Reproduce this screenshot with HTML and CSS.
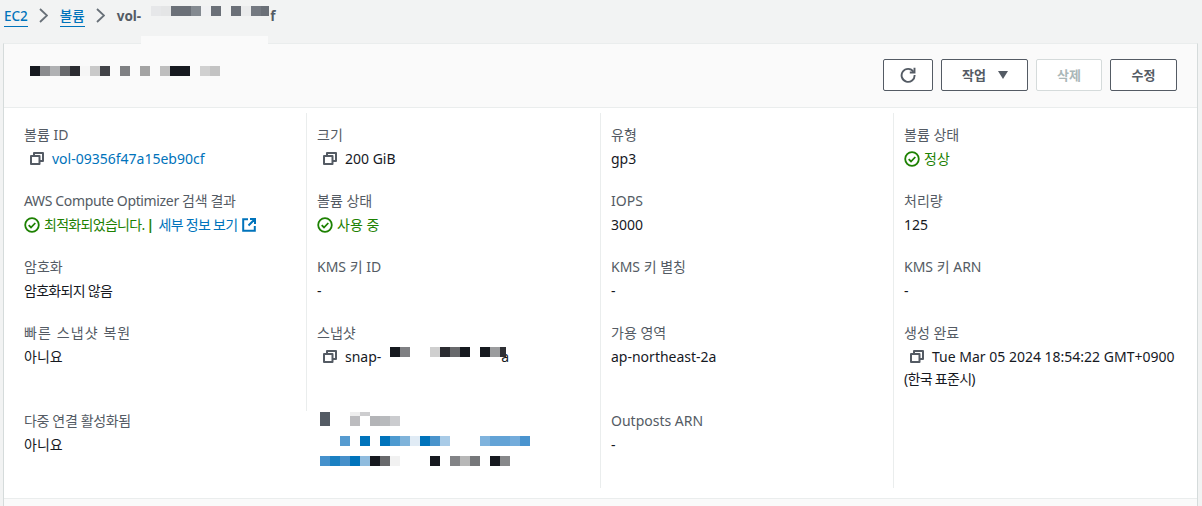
FILE: index.html
```html
<!DOCTYPE html>
<html lang="ko">
<head>
<meta charset="utf-8">
<title>볼륨</title>
<link rel="stylesheet" href="styles.css">
</head>
<body>
<svg class="defs" width="0" height="0" aria-hidden="true">
  <symbol id="copy" viewBox="0 0 14 13"><path d="M4 3V1h9v8h-3M1 4h8.500v8H1z" fill="none" stroke="#545b64" stroke-width="2" stroke-linejoin="round"/></symbol>
  <symbol id="ok" viewBox="0 0 16 16"><circle cx="8" cy="8" r="6.800" fill="none" stroke="#1d8102" stroke-width="1.800"/><path d="M4.700 8.200l2.300 2.300 4.300-4.500" fill="none" stroke="#1d8102" stroke-width="1.800"/></symbol>
</svg>
<nav class="crumbs">
  <a class="crumb-link">EC2</a>
  <svg class="chev" width="9" height="15" viewBox="0 0 9 15"><path d="M1 1l7 6.500-7 6.500" fill="none" stroke="#687078" stroke-width="1.800"/></svg>
  <a class="crumb-link">볼륨</a>
  <svg class="chev" width="9" height="15" viewBox="0 0 9 15"><path d="M1 1l7 6.500-7 6.500" fill="none" stroke="#687078" stroke-width="1.800"/></svg>
  <span class="crumb-current">vol-</span>
  <svg class="mosaic crumb-mosaic" width="118" height="10" shape-rendering="crispEdges">
    <rect x="0" width="10" height="10" fill="#e6e7e9"/><rect x="10" width="10" height="10" fill="#e4e5e6"/><rect x="20" width="20" height="10" fill="#6b7078"/><rect x="40" width="10" height="10" fill="#848a91"/><rect x="50" width="10" height="10" fill="#f0f1f3"/><rect x="60" width="10" height="10" fill="#6b7078"/><rect x="80" width="10" height="10" fill="#6b7078"/><rect x="90" width="10" height="10" fill="#eaebec"/><rect x="100" width="10" height="10" fill="#747981"/><rect x="110" width="8" height="10" fill="#6b7078"/>
  </svg>
  <span class="crumb-current crumb-tail">f</span>
</nav>
<div class="crumb-cover"></div>
<main class="card">
  <header class="card-head">
    <svg class="mosaic title-mosaic" width="190" height="10" shape-rendering="crispEdges">
      <rect x="0" width="10" height="10" fill="#16191f"/><rect x="10" width="10" height="10" fill="#8a8b8e"/><rect x="20" width="10" height="10" fill="#b0b1b3"/><rect x="30" width="10" height="10" fill="#68696c"/><rect x="40" width="10" height="10" fill="#2b2c31"/><rect x="50" width="10" height="10" fill="#f6f6f6"/><rect x="60" width="10" height="10" fill="#c9c9c9"/><rect x="70" width="10" height="10" fill="#424348"/><rect x="90" width="10" height="10" fill="#7f8083"/><rect x="110" width="10" height="10" fill="#a3a3a3"/><rect x="130" width="10" height="10" fill="#bebebe"/><rect x="140" width="20" height="10" fill="#16191f"/><rect x="170" width="10" height="10" fill="#d0d0d0"/><rect x="180" width="10" height="10" fill="#c3c3c3"/>
    </svg>
    <div class="actions">
      <button class="btn btn-icon" aria-label="새로 고침"><svg width="16" height="16" viewBox="0 0 16 16"><path d="M13.500 4.700A6.500 6.500 0 1 0 14.600 8" fill="none" stroke="#545b64" stroke-width="1.900"/><path d="M14.500 0.800v4.700H9.800" fill="none" stroke="#545b64" stroke-width="1.900"/></svg></button>
      <button class="btn btn-menu">작업<svg width="10" height="8" viewBox="0 0 10 8"><path d="M0 0h10L5 8z" fill="#545b64"/></svg></button>
      <button class="btn btn-off" disabled>삭제</button>
      <button class="btn btn-edit">수정</button>
    </div>
  </header>
  <section class="card-body">
    <div class="grid">
      <div class="cell first"><div class="label">볼륨 ID</div><div class="value"><svg class="ic-copy"><use href="#copy"/></svg><a class="link">vol-09356f47a15eb90cf</a></div></div>
      <div class="cell"><div class="label">크기</div><div class="value"><svg class="ic-copy"><use href="#copy"/></svg>200 GiB</div></div>
      <div class="cell"><div class="label">유형</div><div class="value">gp3</div></div>
      <div class="cell"><div class="label">볼륨 상태</div><div class="value ok"><svg class="ic-ok"><use href="#ok"/></svg><span>정상</span></div></div>

      <div class="cell first"><div class="label tight">AWS Compute Optimizer 검색 결과</div><div class="value ok"><svg class="ic-ok"><use href="#ok"/></svg><span class="tighter">최적화되었습니다.<b class="pipe">|</b><a class="link">세부 정보 보기</a></span><svg class="ic-ext" width="14" height="14" viewBox="0 0 14 14"><path d="M6 1.200H1.200v11.600h11.600V8M8 1h5v5M13 1L6.500 7.500" fill="none" stroke="#0073bb" stroke-width="2"/></svg></div></div>
      <div class="cell"><div class="label">볼륨 상태</div><div class="value ok"><svg class="ic-ok"><use href="#ok"/></svg><span>사용 중</span></div></div>
      <div class="cell"><div class="label">IOPS</div><div class="value">3000</div></div>
      <div class="cell"><div class="label">처리량</div><div class="value">125</div></div>

      <div class="cell first"><div class="label">암호화</div><div class="value tighter">암호화되지 않음</div></div>
      <div class="cell"><div class="label">KMS 키 ID</div><div class="value">-</div></div>
      <div class="cell"><div class="label">KMS 키 별칭</div><div class="value">-</div></div>
      <div class="cell"><div class="label">KMS 키 ARN</div><div class="value">-</div></div>

      <div class="cell first"><div class="label wide">빠른 스냅샷 복원</div><div class="value">아니요</div></div>
      <div class="cell"><div class="label">스냅샷</div><div class="value"><svg class="ic-copy"><use href="#copy"/></svg>snap-<svg class="mosaic snap-mosaic" width="116" height="10" shape-rendering="crispEdges"><rect x="0" width="10" height="10" fill="#16191f"/><rect x="10" width="10" height="10" fill="#7f8083"/><rect x="40" width="10" height="10" fill="#cfcfcf"/><rect x="50" width="10" height="10" fill="#2b2c31"/><rect x="60" width="10" height="10" fill="#68696c"/><rect x="70" width="10" height="10" fill="#16191f"/><rect x="90" width="10" height="10" fill="#16191f"/><rect x="100" width="10" height="10" fill="#9b9c9e"/><rect x="110" width="6" height="10" fill="#2e2f34"/></svg><span class="snap-tail">a</span></div></div>
      <div class="cell"><div class="label">가용 영역</div><div class="value">ap-northeast-2a</div></div>
      <div class="cell"><div class="label">생성 완료</div><div class="value"><svg class="ic-copy"><use href="#copy"/></svg>Tue Mar 05 2024 18:54:22 GMT+0900 <span class="tighter">(한국 표준시)</span></div></div>

      <div class="cell first"><div class="label tight">다중 연결 활성화됨</div><div class="value">아니요</div></div>
      <div class="cell short-rule">
        <svg class="mosaic multi-mosaic" width="210" height="54" shape-rendering="crispEdges">
          <rect x="0" y="0" width="10" height="14" fill="#545b64"/>
          <rect x="30" y="0" width="10" height="4" fill="#eeeeee"/><rect x="40" y="0" width="10" height="4" fill="#cdcdcf"/><rect x="30" y="4" width="10" height="10" fill="#bcbcbf"/><rect x="50" y="4" width="10" height="10" fill="#b3b4b7"/><rect x="60" y="4" width="10" height="10" fill="#b8babd"/><rect x="70" y="4" width="10" height="10" fill="#cbcccf"/>
          <rect x="20" y="24" width="10" height="10" fill="#569bd0"/><rect x="40" y="24" width="10" height="10" fill="#0073bb"/><rect x="60" y="24" width="10" height="10" fill="#0073bb"/><rect x="70" y="24" width="10" height="10" fill="#4d9ad0"/><rect x="80" y="24" width="10" height="10" fill="#7fb3da"/><rect x="90" y="24" width="10" height="10" fill="#e0ebf5"/><rect x="100" y="24" width="10" height="10" fill="#0073bb"/><rect x="110" y="24" width="10" height="10" fill="#4a94cc"/><rect x="120" y="24" width="10" height="10" fill="#a9cbe7"/><rect x="160" y="24" width="10" height="10" fill="#7fb3dd"/><rect x="170" y="24" width="20" height="10" fill="#63a3d6"/><rect x="190" y="24" width="10" height="10" fill="#74acdb"/><rect x="200" y="24" width="10" height="10" fill="#4a94cf"/>
          <rect x="0" y="44" width="10" height="10" fill="#4591cc"/><rect x="10" y="44" width="10" height="10" fill="#1a80c2"/><rect x="20" y="44" width="10" height="10" fill="#4690ca"/><rect x="30" y="44" width="10" height="10" fill="#0073bb"/><rect x="40" y="44" width="10" height="10" fill="#90bcde"/><rect x="50" y="44" width="10" height="10" fill="#16191f"/><rect x="60" y="44" width="10" height="10" fill="#68696c"/><rect x="70" y="44" width="10" height="10" fill="#f1f1f1"/><rect x="110" y="44" width="10" height="10" fill="#16191f"/><rect x="130" y="44" width="10" height="10" fill="#828386"/><rect x="140" y="44" width="10" height="10" fill="#b7b7b7"/><rect x="150" y="44" width="10" height="10" fill="#76777a"/><rect x="170" y="44" width="10" height="10" fill="#16191f"/><rect x="180" y="44" width="10" height="10" fill="#87888a"/>
        </svg>
      </div>
      <div class="cell"><div class="label">Outposts ARN</div><div class="value">-</div></div>
      <div class="cell"></div>
    </div>
  </section>
  <footer class="card-foot"></footer>
</main>
</body>
</html>
```
FILE: styles.css
```css
* { box-sizing: border-box; }
html, body { margin: 0; height: 506px; overflow: hidden; }
body {
  position: relative;
  background: #f2f3f3;
  color: #16191f;
  font-family: "Noto Sans", "Noto Sans CJK KR", sans-serif;
  font-size: 14px;
  line-height: 22px;
}
.defs { display: block; height: 0; }
.mosaic { display: block; flex: none; }
.crumbs {
  display: flex;
  align-items: center;
  height: 43px;
  padding: 0 0 12px 4px;
  font-size: 13.500px;
}
.crumb-link {
  color: #0073bb;
  font-weight: 500;
  border-bottom: 1px solid #0073bb;
  line-height: 20px;
  height: 21px;
  margin-top: 1px;
}
.chev { margin: 0 12px 0 11px; flex: none; }
.crumb-current { color: #545b64; font-weight: 700; }
.crumb-mosaic { margin: -9px 0 0 10px; position: relative; z-index: 1; }
.crumb-tail { margin-left: 1px; }
.crumb-cover {
  position: absolute;
  left: 141px;
  top: 36px;
  width: 127px;
  height: 9px;
  background: #fafafa;
  z-index: 2;
}
.card {
  margin-left: 3px;
  width: 1195px;
  border-left: 1px solid #d5dbdb;
  border-right: 1px solid #d5dbdb;
  border-top: 1px solid #eaeded;
}
.card-head {
  display: flex;
  justify-content: space-between;
  align-items: flex-start;
  height: 64px;
  padding: 15px 20px 0 26px;
  background: #fafafa;
  border-bottom: 1px solid #eaeded;
}
.title-mosaic { margin-top: 7px; }
.actions { display: flex; gap: 8px; }
.btn {
  display: flex;
  align-items: center;
  justify-content: center;
  height: 32px;
  padding: 0;
  background: #fff;
  border: 1px solid #545b64;
  border-radius: 2px;
  color: #545b64;
  font: 700 13px/20px "Noto Sans", "Noto Sans CJK KR", sans-serif;
}
.btn-icon { width: 50px; }
.btn-menu { width: 87px; gap: 12px; padding-left: 1px; }
.btn-off { width: 66px; border-color: #d5dbdb; color: #aab7b8; }
.btn-edit { width: 67px; }
.card-body { background: #fff; padding: 5px 0 10px; }
.grid {
  display: grid;
  grid-template-columns: 302px 294px 293px 1fr;
  grid-auto-rows: auto;
}
.cell {
  padding: 11px 20px 9px 10px;
  border-left: 1px solid #eaeded;
  min-height: 66px;
}
.cell.first { padding-left: 20px; border-left: 0; }
.cell.short-rule {
  border-left: 0;
  padding: 13px 0 22px 14px;
  background: linear-gradient(#eaeded, #eaeded) left top / 1px 12px no-repeat;
}
.label { color: #545b64; margin-bottom: 2px; }
.value { color: #16191f; }
.tight { letter-spacing: -0.350px; }
.tighter { letter-spacing: -0.700px; }
.wide { letter-spacing: 1.100px; }
.ic-copy { width: 14px; height: 13px; vertical-align: -1px; margin: 0 8px 0 6px; }
.ok { color: #1d8102; display: flex; align-items: center; gap: 4px; white-space: pre; }
.ic-ok { width: 16px; height: 16px; flex: none; }
.pipe { font-weight: 700; margin: 0 5px 0 2px; }
.link { color: #0073bb; }
.ic-ext { margin-left: 1px; flex: none; }
.snap-mosaic { display: inline-block; vertical-align: top; position: relative; z-index: 1; margin: 1px 0 0 9px; }
.snap-tail { margin-left: -5px; }
.card-foot { height: 8px; background: #fafafa; border-top: 1px solid #eaeded; }
```
